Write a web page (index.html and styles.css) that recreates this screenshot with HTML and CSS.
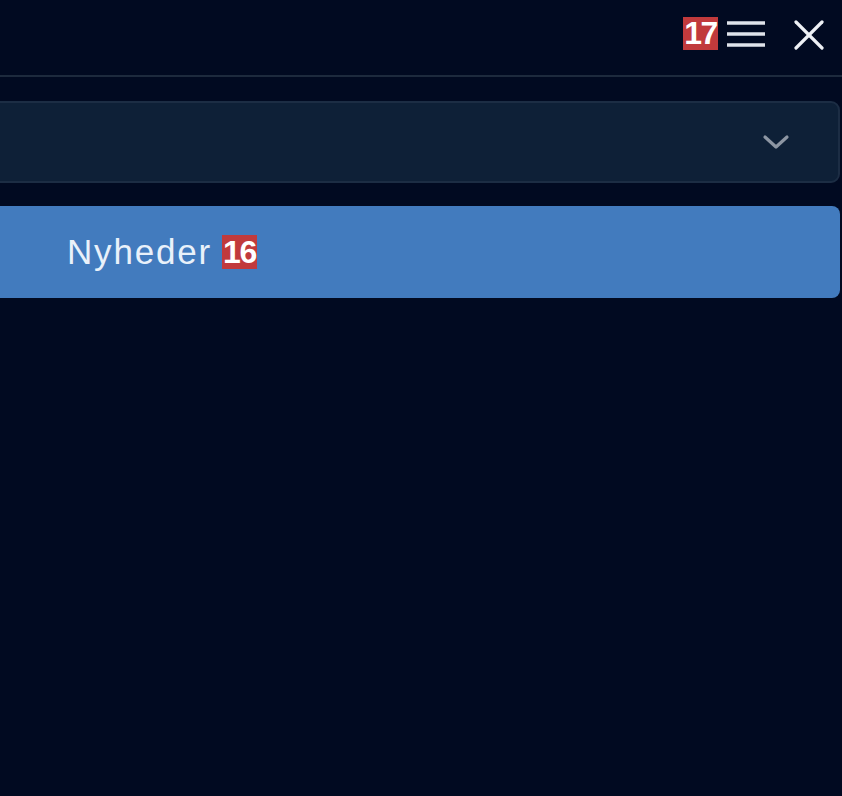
FILE: index.html
```html
<!DOCTYPE html>
<html lang="da">
<head>
<meta charset="utf-8">
<title>Menu</title>
<link rel="stylesheet" href="styles.css">
</head>
<body>
<div class="panel">
  <header class="topbar">
    <span class="badge badge-top">17</span>
    <button class="icon-btn menu" aria-label="Menu">
      <svg width="38" height="26" viewBox="0 0 38 26"><g stroke="#dfe3ea" stroke-width="3.4" stroke-linecap="butt"><line x1="0" y1="2" x2="38" y2="2"/><line x1="0" y1="13" x2="38" y2="13"/><line x1="0" y1="24" x2="38" y2="24"/></g></svg>
    </button>
    <button class="icon-btn close" aria-label="Luk">
      <svg width="30" height="30" viewBox="0 0 30 30"><g stroke="#eef1f5" stroke-width="3.2" stroke-linecap="round"><line x1="2" y1="2" x2="28" y2="28"/><line x1="28" y1="2" x2="2" y2="28"/></g></svg>
    </button>
  </header>
  <div class="content">
    <div class="select">
      <svg class="chevron" width="28" height="18" viewBox="0 0 28 18"><polyline points="3,4 14,14 25,4" fill="none" stroke="#8d96a3" stroke-width="3.2" stroke-linecap="round" stroke-linejoin="round"/></svg>
    </div>
    <div class="item active">
      <span class="item-label">Nyheder</span>
      <span class="badge badge-item">16</span>
    </div>
  </div>
</div>
</body>
</html>
```
FILE: styles.css
```css
html, body {
  margin: 0;
  padding: 0;
  background: #010a21;
  overflow: hidden;
}
body {
  width: 842px;
  height: 796px;
  font-family: "Liberation Sans", Arial, sans-serif;
}
.panel {
  display: flex;
  flex-direction: column;
}
.topbar {
  height: 77px;
  box-sizing: border-box;
  border-bottom: 2px solid #1d2a3d;
  display: flex;
  align-items: flex-start;
  justify-content: flex-end;
  padding-right: 18px;
  padding-top: 17px;
}
.badge {
  background: #c13a3c;
  color: #fff;
  font-weight: bold;
  font-family: "Liberation Sans", Arial, sans-serif;
  display: inline-flex;
  align-items: center;
  justify-content: center;
}
.badge-top {
  width: 35px;
  height: 33px;
  font-size: 32px;
  letter-spacing: -1.5px;
}
.icon-btn {
  background: none;
  border: 0;
  padding: 0;
  display: flex;
  align-items: center;
}
.menu {
  margin-left: 9px;
  margin-top: 4px;
}
.close {
  margin-left: 29px;
  margin-top: 3px;
}
.content {
  display: flex;
  flex-direction: column;
  gap: 23px;
  margin-left: -20px;
  margin-right: 2px;
  padding-top: 24px;
}
.select {
  height: 82px;
  box-sizing: border-box;
  background: #0e2037;
  border: 2px solid #1c2d44;
  border-radius: 9px;
  display: flex;
  align-items: center;
  justify-content: flex-end;
  padding-right: 48px;
}
.chevron {
  margin-top: 0;
}
.item {
  height: 92px;
  background: #427bbe;
  border-radius: 8px;
  display: flex;
  align-items: center;
  padding-left: 87px;
  gap: 10px;
}
.item-label {
  color: #e9f1fa;
  font-size: 35px;
  letter-spacing: 1.8px;
}
.badge-item {
  width: 35px;
  height: 34px;
  font-size: 32px;
  letter-spacing: -1.5px;
}
```
